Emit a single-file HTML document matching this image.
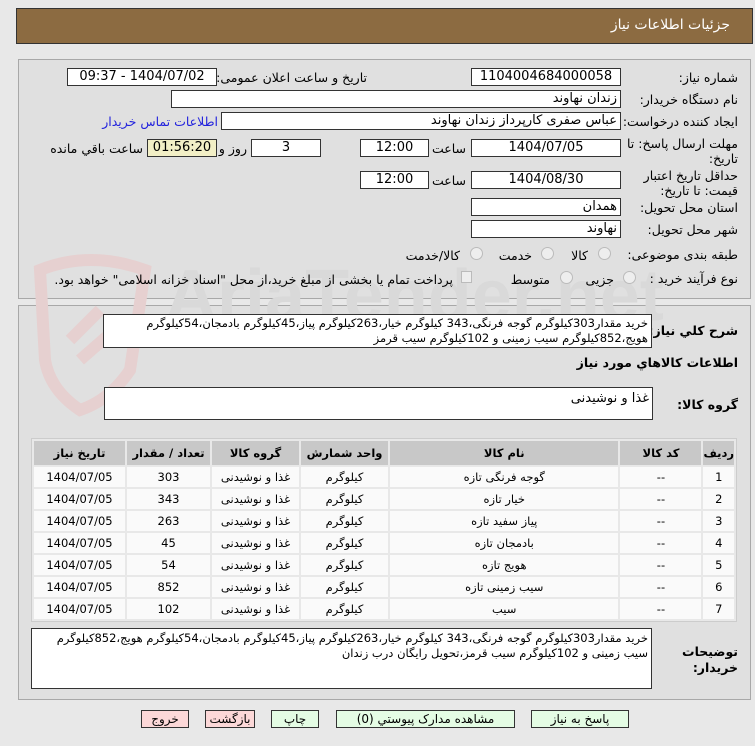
<!DOCTYPE html>
<html><head><meta charset="utf-8"><style>
*{box-sizing:border-box;margin:0;padding:0}
body{width:755px;height:746px;background:#E8E8E8;font-family:"DejaVu Sans","Liberation Sans",sans-serif;font-size:12px;color:#000;position:relative;overflow:hidden}
.a{position:absolute}
.hdr{left:16px;top:8px;width:737px;height:36px;background:#8C6B41;border:1px solid #333;color:#fff;font-size:13px}
.pnl{background:#E0E0E0;border:1px solid #A8A8A8}
.in{position:absolute;background:#fff;border:1px solid #333;height:18px;line-height:16px;font-size:13px;direction:rtl;padding-right:3px;white-space:nowrap;overflow:hidden}
.c{text-align:center;padding:0}
.lb{position:absolute;direction:rtl;white-space:nowrap;font-size:12.5px}
.rad{position:absolute;width:13px;height:13px;border-radius:50%;border:1px solid #bbb;background:#eee}
table{border-collapse:separate;border-spacing:2px;position:absolute;left:31px;top:438px;width:706px;background:#E8E8E8;border:1px solid #ccc;direction:rtl}
td,th{text-align:center;font-size:11.5px;height:20px;padding:0}
th{background:#C8C8C8;height:24px;font-weight:bold}
td{background:#FAFAFA}
.btn{position:absolute;top:710px;height:18px;border:1px solid #333;text-align:center;line-height:16px;font-size:12px;direction:rtl}
.g{background:#E4FCE4}.p{background:#FCD8D8}
</style></head><body>
<div class="a hdr"><span class="a" style="right:22px;top:8px;font-size:14px">جزئیات اطلاعات نیاز</span></div>
<div class="a pnl" style="left:18px;top:59px;width:733px;height:240px"></div>
<div class="a pnl" style="left:18px;top:305px;width:733px;height:395px"></div>
<svg class="a" style="left:20px;top:250px" width="140" height="180"><path d="M20 20 Q70 0 125 20 L110 120 Q90 150 60 160 Q30 140 25 110 Z" fill="none" stroke="#E6D0D0" stroke-width="12"/><path d="M50 90 L80 60 M60 110 L100 75" stroke="#E6D0D0" stroke-width="12"/></svg>
<div class="a" style="left:165px;top:255px;font-size:72px;font-weight:bold;color:#D9D9D9;font-family:'Liberation Sans',sans-serif">AriaTender.net</div>

<div class="lb" style="right:17px;top:70px">شماره نیاز:</div>
<div class="in c" style="left:471px;top:68px;width:150px">1104004684000058</div>
<div class="lb" style="right:388px;top:70px">تاریخ و ساعت اعلان عمومی:</div>
<div class="in c" style="left:67px;top:68px;width:150px">1404/07/02 - 09:37</div>

<div class="lb" style="right:17px;top:92px">نام دستگاه خریدار:</div>
<div class="in" style="left:171px;top:90px;width:450px">زندان نهاوند</div>

<div class="lb" style="right:17px;top:114px">ایجاد کننده درخواست:</div>
<div class="in" style="left:221px;top:112px;width:400px">عباس صفری کارپرداز زندان نهاوند</div>
<div class="lb" style="right:537px;top:114px;color:#2222DD">اطلاعات تماس خریدار</div>

<div class="lb" style="right:17px;top:136px;line-height:15px;text-align:right">مهلت ارسال پاسخ: تا<br>تاریخ:</div>
<div class="in c" style="left:471px;top:139px;width:150px">1404/07/05</div>
<div class="lb" style="right:289px;top:141px">ساعت</div>
<div class="in c" style="left:360px;top:139px;width:69px">12:00</div>
<div class="in c" style="left:251px;top:139px;width:70px">3</div>
<div class="lb" style="right:508px;top:141px">روز و</div>
<div class="in c" style="left:147px;top:139px;width:70px;background:#F2EFC6">01:56:20</div>
<div class="lb" style="right:612px;top:141px">ساعت باقي مانده</div>

<div class="lb" style="right:17px;top:168px;line-height:15px;text-align:right">حداقل تاریخ اعتبار<br>قیمت: تا تاریخ:</div>
<div class="in c" style="left:471px;top:171px;width:150px">1404/08/30</div>
<div class="lb" style="right:289px;top:173px">ساعت</div>
<div class="in c" style="left:360px;top:171px;width:69px">12:00</div>

<div class="lb" style="right:17px;top:200px">استان محل تحویل:</div>
<div class="in" style="left:471px;top:198px;width:150px">همدان</div>
<div class="lb" style="right:17px;top:222px">شهر محل تحویل:</div>
<div class="in" style="left:471px;top:220px;width:150px">نهاوند</div>

<div class="lb" style="right:17px;top:247px">طبقه بندی موضوعی:</div>
<div class="rad" style="left:598px;top:247px"></div><div class="lb" style="right:167px;top:248px">کالا</div>
<div class="rad" style="left:541px;top:247px"></div><div class="lb" style="right:223px;top:248px">خدمت</div>
<div class="rad" style="left:470px;top:247px"></div><div class="lb" style="right:295px;top:248px">کالا/خدمت</div>

<div class="lb" style="right:17px;top:271px">نوع فرآیند خرید :</div>
<div class="rad" style="left:623px;top:271px"></div><div class="lb" style="right:141px;top:272px">جزیی</div>
<div class="rad" style="left:560px;top:271px"></div><div class="lb" style="right:205px;top:272px">متوسط</div>
<div class="a" style="left:461px;top:271px;width:11px;height:12px;border:1px solid #bbb;background:#eee"></div>
<div class="lb" style="right:302px;top:272px">پرداخت تمام یا بخشی از مبلغ خرید،از محل "اسناد خزانه اسلامی" خواهد بود.</div>

<div class="lb" style="right:17px;top:323px;font-weight:bold">شرح کلي نیاز:</div>
<div class="in" style="left:103px;top:314px;width:549px;height:34px;white-space:normal;line-height:15px;font-size:11.5px;padding-top:1px;letter-spacing:-0.2px">خرید مقدار303کیلوگرم گوجه فرنگی،343 کیلوگرم خیار،263کیلوگرم پیاز،45کیلوگرم بادمجان،54کیلوگرم هویج،852کیلوگرم سیب زمینی و 102کیلوگرم سیب قرمز</div>
<div class="lb" style="right:17px;top:355px;font-weight:bold">اطلاعات کالاهاي مورد نیاز</div>
<div class="lb" style="right:17px;top:397px;font-weight:bold">گروه کالا:</div>
<div class="in" style="left:104px;top:387px;width:549px;height:33px;padding-top:3px">غذا و نوشیدنی</div>

<table>
<tr><th style="width:26px">ردیف</th><th style="width:81px">کد کالا</th><th>نام کالا</th><th style="width:87px">واحد شمارش</th><th style="width:87px">گروه کالا</th><th style="width:83px">تعداد / مقدار</th><th style="width:91px">تاریخ نیاز</th></tr>
<tr><td>1</td><td>--</td><td>گوجه فرنگی تازه</td><td>کیلوگرم</td><td>غذا و نوشیدنی</td><td>303</td><td>1404/07/05</td></tr>
<tr><td>2</td><td>--</td><td>خیار تازه</td><td>کیلوگرم</td><td>غذا و نوشیدنی</td><td>343</td><td>1404/07/05</td></tr>
<tr><td>3</td><td>--</td><td>پیاز سفید تازه</td><td>کیلوگرم</td><td>غذا و نوشیدنی</td><td>263</td><td>1404/07/05</td></tr>
<tr><td>4</td><td>--</td><td>بادمجان تازه</td><td>کیلوگرم</td><td>غذا و نوشیدنی</td><td>45</td><td>1404/07/05</td></tr>
<tr><td>5</td><td>--</td><td>هویج تازه</td><td>کیلوگرم</td><td>غذا و نوشیدنی</td><td>54</td><td>1404/07/05</td></tr>
<tr><td>6</td><td>--</td><td>سیب زمینی تازه</td><td>کیلوگرم</td><td>غذا و نوشیدنی</td><td>852</td><td>1404/07/05</td></tr>
<tr><td>7</td><td>--</td><td>سیب</td><td>کیلوگرم</td><td>غذا و نوشیدنی</td><td>102</td><td>1404/07/05</td></tr>
</table>

<div class="lb" style="right:17px;top:644px;font-weight:bold;line-height:16px;text-align:right">توضیحات<br>خریدار:</div>
<div class="in" style="left:31px;top:628px;width:621px;height:61px;white-space:normal;line-height:15px;font-size:11.5px;padding-top:2px;letter-spacing:-0.2px">خرید مقدار303کیلوگرم گوجه فرنگی،343 کیلوگرم خیار،263کیلوگرم پیاز،45کیلوگرم بادمجان،54کیلوگرم هویج،852کیلوگرم سیب زمینی و 102کیلوگرم سیب قرمز،تحویل رایگان درب زندان</div>

<div class="btn g" style="left:531px;width:98px">پاسخ به نیاز</div>
<div class="btn g" style="left:336px;width:179px">مشاهده مدارک پیوستي (0)</div>
<div class="btn g" style="left:271px;width:48px">چاپ</div>
<div class="btn p" style="left:205px;width:50px">بازگشت</div>
<div class="btn p" style="left:141px;width:48px">خروج</div>
</body></html>
